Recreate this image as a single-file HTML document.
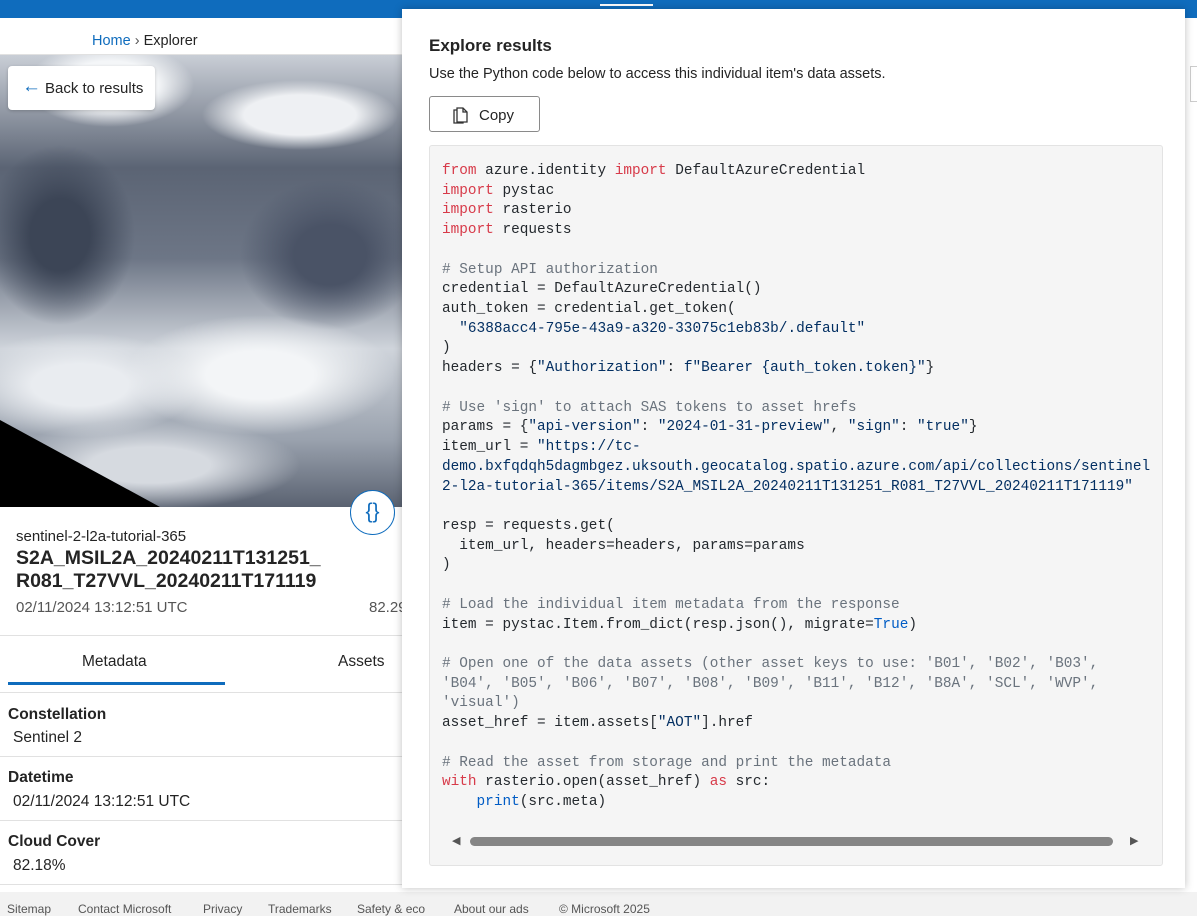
<!DOCTYPE html>
<html><head><meta charset="utf-8"><style>
*{box-sizing:border-box;margin:0;padding:0}
body{width:1197px;height:916px;overflow:hidden;background:#fff;font-family:"Liberation Sans",Arial,sans-serif;position:relative;color:#242424}
.top{position:absolute;left:0;top:0;width:1197px;height:18px;background:#0f6cbd}
.bc{position:absolute;left:92px;top:33px;font-size:14.5px}
.bc a{color:#0f6cbd}
.img{position:absolute;left:0;top:55px;width:402px;height:452px;overflow:hidden;
background:
radial-gradient(ellipse 120px 60px at 110px 30px,#f4f6f8 40%,transparent 70%),
radial-gradient(ellipse 140px 50px at 300px 60px,#eef0f3 40%,transparent 70%),
radial-gradient(ellipse 180px 80px at 260px 320px,#f3f5f7 30%,transparent 75%),
radial-gradient(ellipse 160px 70px at 80px 330px,#e9ecf0 30%,transparent 75%),
radial-gradient(ellipse 200px 60px at 150px 410px,#d6dae0 30%,transparent 75%),
radial-gradient(ellipse 100px 120px at 60px 180px,#3c4556 30%,transparent 75%),
radial-gradient(ellipse 120px 100px at 330px 200px,#4a5366 30%,transparent 75%),
linear-gradient(180deg,#c9ced6 0%,#5b6474 25%,#6d7686 45%,#cfd4db 65%,#9aa2ae 85%,#5a6271 100%)}
.tri{position:absolute;left:0;top:365px;width:0;height:0;border-left:160px solid #000;border-top:87px solid transparent}
.back{position:absolute;left:8px;top:66px;width:147px;height:44px;background:#fff;border-radius:4px;box-shadow:0 1px 3px rgba(0,0,0,.2);font-size:15px;padding:14px 0 0 37px}
.back span{position:absolute;left:14px;top:10px;font-size:19px;color:#0f6cbd}
.curly{position:absolute;left:350px;top:490px;width:45px;height:45px;border:1.5px solid #0f6cbd;border-radius:50%;background:#fff;color:#0f6cbd;font-size:21px;text-align:center;line-height:41px}
.coll{position:absolute;left:16px;top:528px;font-size:15px}
.title{position:absolute;left:16px;top:547px;font-size:19.5px;font-weight:bold;line-height:23px}
.dt{position:absolute;left:16px;top:599px;font-size:15px;color:#555}
.pct{position:absolute;left:369px;top:599px;font-size:15px;color:#555}
.hr{position:absolute;left:0;width:402px;height:1px;background:#e1e1e1}
.tab{position:absolute;top:653px;font-size:15.5px}
.ul{position:absolute;left:8px;top:682px;width:217px;height:3px;background:#0f6cbd}
.lab{position:absolute;left:8px;font-size:15.5px;font-weight:bold}
.val{position:absolute;left:13px;font-size:15.5px}
.foot{position:absolute;left:0;top:892px;width:1197px;height:24px;background:#f2f2f2;font-size:12px;color:#555}
.foot span{position:absolute;top:10px}
.panel{position:absolute;left:402px;top:9px;width:783px;height:879px;background:#fff;box-shadow:0 0 8px rgba(0,0,0,.25)}
.ph{position:absolute;left:27px;top:27px;font-size:17px;font-weight:bold}
.pd{position:absolute;left:27px;top:57px;font-size:14.5px}
.copy{position:absolute;left:27px;top:87px;width:111px;height:36px;border:1px solid #8a8a8a;border-radius:3px;font-size:15px;padding:10px 0 0 49px}
.code{position:absolute;left:27px;top:136px;width:734px;height:721px;background:#f5f5f5;border:1px solid #e3e3e3;border-radius:3px}
pre{position:absolute;left:12px;top:16px;font-family:"Liberation Mono",monospace;font-size:14.4px;line-height:19.72px;color:#24292e}
.k{color:#d73a49}.c{color:#6a737d}.s{color:#032f62}.b{color:#005cc5}
.sb{position:absolute;left:20px;top:688px;width:700px;height:14px}
.thumb{position:absolute;left:20px;top:3px;width:643px;height:9px;background:#858585;border-radius:5px}
.rs{position:absolute;left:1190px;top:66px;width:7px;height:36px;border:1px solid #ccc;border-right:none;background:#fff}
</style></head><body>
<div class="top"><div style="position:absolute;left:600px;top:4px;width:53px;height:2px;background:#fff"></div></div>
<div class="bc"><a>Home</a> <span style="color:#555">&#x203A;</span> Explorer</div>
<div class="hr" style="top:54px"></div>
<div class="img"><div class="tri"></div></div>
<div class="back"><span>&#8592;</span>Back to results</div>
<div class="curly">{}</div>
<div class="coll">sentinel-2-l2a-tutorial-365</div>
<div class="title">S2A_MSIL2A_20240211T131251_<br>R081_T27VVL_20240211T171119</div>
<div class="dt">02/11/2024 13:12:51 UTC</div>
<div class="pct">82.29</div>
<div class="hr" style="top:635px"></div>
<div class="tab" style="left:82px">Metadata</div>
<div class="tab" style="left:338px">Assets</div>
<div class="ul"></div>
<div class="hr" style="top:692px"></div>
<div class="lab" style="top:706px">Constellation</div><div class="val" style="top:729px">Sentinel 2</div>
<div class="hr" style="top:756px"></div>
<div class="lab" style="top:769px">Datetime</div><div class="val" style="top:793px">02/11/2024 13:12:51 UTC</div>
<div class="hr" style="top:820px"></div>
<div class="lab" style="top:833px">Cloud Cover</div><div class="val" style="top:857px">82.18%</div>
<div class="hr" style="top:884px"></div>
<div class="rs"></div>
<div class="foot"><span style="left:7px">Sitemap</span><span style="left:78px">Contact Microsoft</span><span style="left:203px">Privacy</span><span style="left:268px">Trademarks</span><span style="left:357px">Safety &amp; eco</span><span style="left:454px">About our ads</span><span style="left:559px">© Microsoft 2025</span></div>
<div class="panel">
<div class="ph">Explore results</div>
<div class="pd">Use the Python code below to access this individual item's data assets.</div>
<div class="copy"><svg style="position:absolute;left:22px;top:8px" width="17" height="19" viewBox="0 0 17 19" fill="none" stroke="#333" stroke-width="1.3"><path d="M5 3h6l4 4v10H5z"/><path d="M11 3v4h4"/><path d="M5 5H2v13h9v-1"/></svg>Copy</div>
<div class="code">
<pre><span class="k">from</span> azure.identity <span class="k">import</span> DefaultAzureCredential
<span class="k">import</span> pystac
<span class="k">import</span> rasterio
<span class="k">import</span> requests

<span class="c"># Setup API authorization</span>
credential = DefaultAzureCredential()
auth_token = credential.get_token(
  <span class="s">"6388acc4-795e-43a9-a320-33075c1eb83b/.default"</span>
)
headers = {<span class="s">"Authorization"</span>: <span class="s">f"Bearer {auth_token.token}"</span>}

<span class="c"># Use 'sign' to attach SAS tokens to asset hrefs</span>
params = {<span class="s">"api-version"</span>: <span class="s">"2024-01-31-preview"</span>, <span class="s">"sign"</span>: <span class="s">"true"</span>}
item_url = <span class="s">"https://tc-
demo.bxfqdqh5dagmbgez.uksouth.geocatalog.spatio.azure.com/api/collections/sentinel
2-l2a-tutorial-365/items/S2A_MSIL2A_20240211T131251_R081_T27VVL_20240211T171119"</span>

resp = requests.get(
  item_url, headers=headers, params=params
)

<span class="c"># Load the individual item metadata from the response</span>
item = pystac.Item.from_dict(resp.json(), migrate=<span class="b">True</span>)

<span class="c"># Open one of the data assets (other asset keys to use: 'B01', 'B02', 'B03',
'B04', 'B05', 'B06', 'B07', 'B08', 'B09', 'B11', 'B12', 'B8A', 'SCL', 'WVP',
'visual')</span>
asset_href = item.assets[<span class="s">"AOT"</span>].href

<span class="c"># Read the asset from storage and print the metadata</span>
<span class="k">with</span> rasterio.open(asset_href) <span class="k">as</span> src:
    <span class="b">print</span>(src.meta)</pre>
<div class="sb"><span style="position:absolute;left:2px;top:0;font-size:11px;color:#555">&#9664;</span><div class="thumb"></div><span style="position:absolute;left:680px;top:0;font-size:11px;color:#555">&#9654;</span></div>
</div>
</div>
</body></html>
